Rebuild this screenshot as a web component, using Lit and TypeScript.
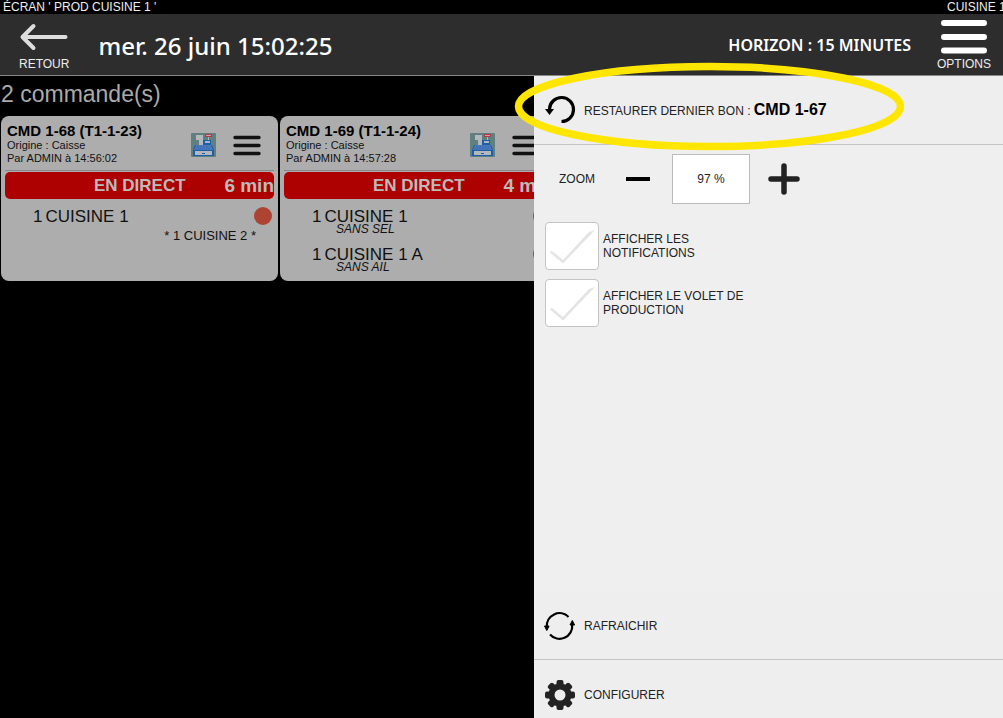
import { LitElement, html, css, svg, nothing } from "lit";
import { customElement, property } from "lit/decorators.js";

interface Line {
  qty: number;
  name: string;
  note?: string;
  side?: string;
}

interface Order {
  title: string;
  origin: string;
  author: string;
  mode: string;
  wait: string;
  lines: Line[];
}

const ORDERS: Order[] = [
  {
    title: "CMD 1-68 (T1-1-23)",
    origin: "Origine : Caisse",
    author: "Par ADMIN à 14:56:02",
    mode: "EN DIRECT",
    wait: "6 min",
    lines: [{ qty: 1, name: "CUISINE 1", side: "* 1 CUISINE 2 *" }],
  },
  {
    title: "CMD 1-69 (T1-1-24)",
    origin: "Origine : Caisse",
    author: "Par ADMIN à 14:57:28",
    mode: "EN DIRECT",
    wait: "4 min",
    lines: [
      { qty: 1, name: "CUISINE 1", note: "SANS SEL" },
      { qty: 1, name: "CUISINE 1 A", note: "SANS AIL" },
    ],
  },
];

const registerIcon = html`<svg width="25" height="24" viewBox="0 0 25 24" aria-hidden="true">
  <rect width="25" height="24" rx="1" fill="#5f7f80" />
  <path d="M4 12h17l2 5v6H2v-6z" fill="#1d5fa6" />
  <path d="M5 12h15l2 5H3z" fill="#4a78bd" />
  <path d="M6 14h13M5 16h15" stroke="#3a68ad" stroke-dasharray="2 1" />
  <path d="M12 7h8v5h-8z" fill="#1d5fa6" />
  <path d="M14 8h5v2h-5zM17 4h1v3h-1z" fill="#a9b6c4" />
  <path d="M5 2h7v10H8V7H5z" fill="#b4b8bc" />
  <path d="M14 1h7v3h-7z" fill="#b03a4a" />
  <path d="M15 2h5v1h-5z" fill="#d0a0a8" />
  <path d="M4 18h17v4H4z" fill="#b4b8bc" />
  <path d="M11 20h3v1h-3z" fill="#1d5fa6" />
</svg>`;

const restoreIcon = html`<svg width="32" height="30" viewBox="0 0 32 30" aria-hidden="true">
  <path d="M5.500 14A12 12 0 1 1 17.500 26.500" fill="none" stroke="#000" stroke-width="3.200" />
  <path d="M1 14h9l-4.500 6z" fill="#000" />
</svg>`;

const refreshIcon = html`<svg width="32" height="30" viewBox="0 0 32 30" aria-hidden="true">
  <g fill="none" stroke="#000" stroke-width="2.200">
    <path d="M2.800 16A12.700 12.700 0 0 1 24.500 6" />
    <path d="M28.200 14A12.700 12.700 0 0 1 6 23.500" />
  </g>
  <path d="M.500 15h4.600l-2.300 4.500zM26 14h4.600l-2.300-4.500z" fill="#000" stroke="#000" />
</svg>`;

const gearIcon = html`<svg width="32" height="32" viewBox="0 0 32 32" aria-hidden="true">
  <g fill="#222">
    ${[0, 45, 90, 135].map(
      (a) => svg`<rect x="12.500" y="1" width="7" height="30" rx="2" transform="rotate(${a} 16 16)" />`
    )}
    <circle cx="16" cy="16" r="11.500" />
  </g>
  <circle cx="16" cy="16" r="5.500" fill="#eee" />
</svg>`;

@customElement("order-card")
export class OrderCard extends LitElement {
  @property({ attribute: false }) order!: Order;

  static styles = css`
    :host {
      display: block;
      box-sizing: border-box;
      width: 277px;
      min-height: 165px;
      padding: 5px 4px 0;
      border-radius: 8px;
      background: #adadad;
      color: #111;
    }
    .head {
      display: flex;
      height: 49px;
      padding: 0 13px 0 2px;
      border-bottom: 1px solid #888;
    }
    .info {
      flex: 1;
      font-size: 11px;
      line-height: 13px;
      padding-top: 1px;
    }
    h2 {
      margin: 0;
      font-size: 15px;
      line-height: 17px;
      color: #000;
    }
    p {
      margin: 0;
    }
    .register {
      padding-top: 12px;
    }
    .menu {
      display: block;
      height: 21px;
      margin: 14px 0 0 17px;
      padding: 0;
      border: 0;
      background: none;
    }
    svg {
      display: block;
    }
    .status {
      display: grid;
      grid-template-columns: 1fr 91px 1fr;
      margin-top: 1px;
      height: 27px;
      border-radius: 5px;
      background: #ad0000;
      color: #bbb;
      font-size: 17px;
      font-weight: bold;
      line-height: 27px;
      white-space: nowrap;
    }
    .wait {
      text-align: right;
      font-size: 19px;
    }
    .lines {
      margin: 8px 2px 0 28px;
      padding: 0;
      list-style: none;
    }
    li {
      height: 38px;
    }
    li:last-child {
      height: 34px;
    }
    .row {
      display: flex;
      gap: 3px;
      font-size: 17px;
      line-height: 20px;
    }
    .name {
      flex: 1;
    }
    .dot {
      width: 18px;
      height: 18px;
      border-radius: 50%;
      background: #ad4433;
    }
    .note {
      margin: -4px 0 0 24px;
      font-size: 12px;
      font-style: italic;
      line-height: 12px;
    }
    .side {
      padding-right: 16px;
      text-align: right;
      font-size: 13px;
      line-height: 17px;
    }
  `;

  render() {
    const o = this.order;
    return html`
      <div class="head">
        <div class="info">
          <h2>${o.title}</h2>
          <p>${o.origin}</p>
          <p>${o.author}</p>
        </div>
        <span class="register">${registerIcon}</span>
        <button class="menu" aria-label="Menu">
          <svg width="28" height="21" viewBox="0 0 28 21">
            <path d="M2 2.500h24M2 10.500h24M2 18.500h24" stroke="#111" stroke-width="3.400" stroke-linecap="round" />
          </svg>
        </button>
      </div>
      <div class="status">
        <span></span><span>${o.mode}</span><span class="wait">${o.wait}</span>
      </div>
      <ul class="lines">
        ${o.lines.map(
          (l) => html`<li>
            <div class="row"><span>${l.qty}</span><span class="name">${l.name}</span><i class="dot"></i></div>
            ${l.note ? html`<p class="note">${l.note}</p>` : nothing}
            ${l.side ? html`<p class="side">${l.side}</p>` : nothing}
          </li>`
        )}
      </ul>
    `;
  }
}

@customElement("app-root")
export class AppRoot extends LitElement {
  static styles = css`
    :host {
      display: flex;
      flex-direction: column;
      position: relative;
      height: 100vh;
      overflow: hidden;
      background: #000;
      font-family: "Liberation Sans", Arial, sans-serif;
      font-size: 12px;
      color: #eee;
    }
    * {
      box-sizing: border-box;
    }
    button {
      border: 0;
      padding: 0;
      background: none;
      font: inherit;
      color: inherit;
      text-align: left;
    }
    svg {
      display: block;
    }
    .strip {
      display: flex;
      justify-content: space-between;
      height: 14px;
      padding-left: 3px;
      line-height: 14px;
      white-space: nowrap;
    }
    .room {
      width: 56px;
    }
    .bar {
      display: flex;
      align-items: center;
      height: 62px;
      padding: 0 12px 0 19px;
      background: #2d2d2d;
      border-bottom: 1px solid #888;
      font-family: "Noto Sans", sans-serif;
      color: #fff;
    }
    .nav {
      display: flex;
      flex-direction: column;
      align-items: center;
      height: 53px;
      justify-content: space-between;
      font-family: "Liberation Sans", Arial, sans-serif;
      line-height: 13px;
      color: #eee;
    }
    .back {
      padding-top: 5px;
    }
    .clock {
      flex: 1;
      margin: 2px 0 0 29px;
      font-size: 24px;
      font-weight: 500;
      line-height: 30px;
    }
    .horizon {
      margin-right: 26px;
      font-size: 16px;
      font-weight: 600;
      line-height: 22px;
    }
    .body {
      display: flex;
      flex: 1;
      min-height: 0;
    }
    .orders {
      flex: 1;
      min-width: 0;
      overflow: hidden;
    }
    h1 {
      margin: 0;
      padding: 3px 0 0 1px;
      height: 40px;
      font-size: 23px;
      font-weight: normal;
      line-height: 31px;
      color: #aaa;
    }
    .cards {
      display: flex;
      gap: 2px;
      padding-left: 1px;
    }
    order-card {
      flex: none;
    }
    .panel {
      display: flex;
      flex-direction: column;
      flex: none;
      width: 469px;
      background: #efefef;
      color: #222;
    }
    .action {
      display: flex;
      align-items: center;
      gap: 8px;
      padding-left: 10px;
      background: #eee;
    }
    .restore {
      height: 69px;
      border-bottom: 1px solid #c4c4c4;
    }
    .refresh {
      height: 68px;
      border-bottom: 1px solid #c4c4c4;
    }
    .configure {
      height: 58px;
      padding-top: 12px;
    }
    .restore b {
      font-size: 16px;
      color: #000;
    }
    .settings {
      flex: 1;
      padding: 9px 11px;
    }
    .zoom {
      display: flex;
      align-items: center;
      height: 50px;
      margin-bottom: 18px;
      padding-left: 14px;
    }
    .zoom label {
      width: 67px;
    }
    .zoom input {
      width: 78px;
      height: 50px;
      margin: 0 18px 0 22px;
      border: 1px solid #bbb;
      background: #fff;
      font: inherit;
      color: #222;
      text-align: center;
    }
    .check {
      display: flex;
      align-items: center;
      gap: 4px;
      height: 48px;
      margin-bottom: 9px;
      line-height: 14px;
    }
    .caption {
      display: block;
      width: 150px;
    }
    .check input {
      appearance: none;
      width: 54px;
      height: 48px;
      margin: 0;
      border: 1px solid #c4c4c4;
      border-radius: 4px;
      background: #fff;
    }
    .box {
      display: grid;
    }
    .box > * {
      grid-area: 1 / 1;
    }
    .box svg {
      pointer-events: none;
    }
    .ring {
      position: absolute;
      left: 513px;
      top: 61px;
      pointer-events: none;
    }
  `;

  private check(id: string, label: string) {
    return html`<div class="check">
      <div class="box">
        <input type="checkbox" id=${id} />
        <svg width="54" height="48" viewBox="0 0 54 48" aria-hidden="true">
          <path d="M5 30.500L18 41.500 50 8l-6 2L18 38 6.500 28.500z" fill="#e4e4e4" />
        </svg>
      </div>
      <label for=${id}><span class="caption">${label}</span></label>
    </div>`;
  }

  render() {
    return html`
      <div class="strip"><span>ÉCRAN ' PROD CUISINE 1 '</span><span class="room">CUISINE 1</span></div>
      <header class="bar">
        <button class="nav back">
          <svg width="50" height="28" viewBox="0 0 50 28" aria-hidden="true">
            <path d="M46.500 14H4M14.500 3L3.500 14l11 11" fill="none" stroke="#ddd" stroke-width="4" stroke-linecap="round" stroke-linejoin="round" />
          </svg>
          RETOUR
        </button>
        <time class="clock">mer. 26 juin 15:02:25</time>
        <span class="horizon">HORIZON : 15 MINUTES</span>
        <button class="nav">
          <svg width="46" height="38" viewBox="0 0 46 38" aria-hidden="true">
            <path d="M3 5h40M3 19h40M3 32.500h40" stroke="#fff" stroke-width="6" stroke-linecap="round" />
          </svg>
          OPTIONS
        </button>
      </header>
      <div class="body">
        <main class="orders">
          <h1>2 commande(s)</h1>
          <div class="cards">${ORDERS.map((o) => html`<order-card .order=${o}></order-card>`)}</div>
        </main>
        <aside class="panel">
          <button class="action restore">
            ${restoreIcon}<span>RESTAURER DERNIER BON : <b>CMD 1-67</b></span>
          </button>
          <section class="settings">
            <div class="zoom">
              <label for="zoom">ZOOM</label>
              <button aria-label="Zoom arrière">
                <svg width="24" height="32" viewBox="0 0 24 32"><path d="M0 14h24v4H0z" fill="#000" /></svg>
              </button>
              <input id="zoom" type="text" value="97 %" />
              <button aria-label="Zoom avant">
                <svg width="32" height="32" viewBox="0 0 32 32">
                  <path d="M3 16h26M16 3v26" stroke="#222" stroke-width="5.500" stroke-linecap="round" />
                </svg>
              </button>
            </div>
            ${this.check("notifications", "AFFICHER LES NOTIFICATIONS")}
            ${this.check("production", "AFFICHER LE VOLET DE PRODUCTION")}
          </section>
          <button class="action refresh">${refreshIcon}RAFRAICHIR</button>
          <button class="action configure">${gearIcon}CONFIGURER</button>
        </aside>
      </div>
      <svg class="ring" width="394" height="90" viewBox="0 0 394 90" aria-hidden="true">
        <ellipse cx="196.500" cy="45.500" rx="191" ry="40" fill="none" stroke="#ffe600" stroke-width="7.500" />
      </svg>
    `;
  }
}
